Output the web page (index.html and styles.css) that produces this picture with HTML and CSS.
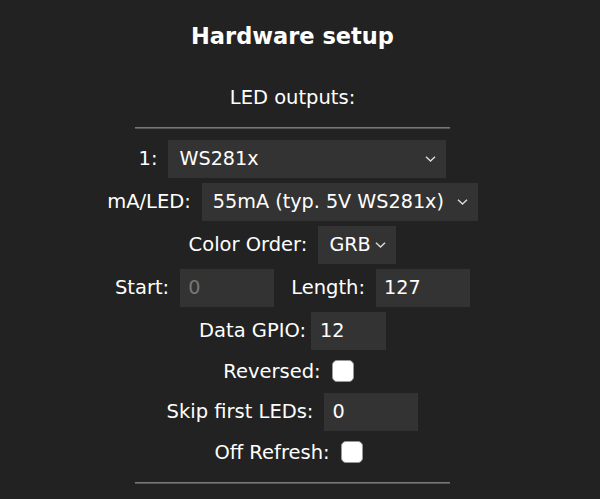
FILE: index.html
```html
<html>
<head>
    <title>Hardware setup</title>
    <link rel="stylesheet" href="styles.css">
</head>
<body>
    <div class="page">
        <h2 class="title">Hardware setup</h2>
        <div class="sect">LED outputs:</div>
        <hr>
        <div class="row">
            <span>1:</span>
            <select class="sel sel-type"><option>WS281x</option></select>
        </div>
        <div class="row">
            <span>mA/LED:</span>
            <select class="sel sel-ma"><option>55mA (typ. 5V WS281x)</option></select>
        </div>
        <div class="row">
            <span>Color Order:</span>
            <select class="sel sel-co"><option>GRB</option></select>
        </div>
        <div class="row">
            <span>Start:</span>
            <input class="num" type="number" placeholder="0" disabled>
            <span class="next">Length:</span>
            <input class="num" type="number" value="127">
        </div>
        <div class="row">
            <span>Data GPIO:</span>
            <input class="num gpio" type="number" value="12">
        </div>
        <div class="row short">
            <span>Reversed:</span>
            <input class="chk" type="checkbox">
        </div>
        <div class="row">
            <span>Skip first LEDs:</span>
            <input class="num" type="number" value="0">
        </div>
        <div class="row short">
            <span>Off Refresh:</span>
            <input class="chk" type="checkbox">
        </div>
        <hr class="end">
    </div>
</body>
</html>
```

FILE: styles.css
```css
body {
    margin: 0;
    background: #222;
    color: #fff;
    font-family: "DejaVu Sans", Verdana, sans-serif;
}
.page {
    width: 585px;
    text-align: center;
}
.title {
    margin: 23px 0 0;
    font-size: 22.5px;
    line-height: 26px;
}
.sect {
    margin-top: 37px;
    font-size: 19.5px;
    line-height: 23px;
}
hr {
    width: 315px;
    height: 0;
    margin: 18px auto 8px;
    border: 0;
    border-top: 1px solid #777;
    border-bottom: 1px solid #555;
}
hr.end {
    margin-top: 11px;
}
.row {
    display: flex;
    justify-content: center;
    align-items: center;
    height: 43px;
    font-size: 19.5px;
}
.row.short {
    height: 38px;
}
.sel, .num {
    box-sizing: border-box;
    height: 38px;
    margin: 0 0 0 11px;
    border: 0;
    border-radius: 0;
    outline: none;
    background-color: #333;
    color: #fff;
    font-family: "DejaVu Sans", Verdana, sans-serif;
    font-size: 19.2px;
}
.sel {
    appearance: none;
    -webkit-appearance: none;
    padding: 0 0 0 11px;
    text-align: left;
    background-image: url("data:image/svg+xml,%3Csvg xmlns='http://www.w3.org/2000/svg' width='11' height='6' viewBox='0 0 11 6'%3E%3Cpath d='M1 0.8 L5.5 5 L10 0.8' fill='none' stroke='%23ddd' stroke-width='1.4'/%3E%3C/svg%3E");
    background-repeat: no-repeat;
    background-position: right 10px center;
    background-size: 11px 6px;
}
.sel-type { width: 278px; }
.sel-ma { width: 276px; }
.sel-co { width: 78px; }
.num {
    width: 94px;
    padding: 0 8px;
    text-align: left;
    -moz-appearance: textfield;
}
.num::-webkit-inner-spin-button,
.num::-webkit-outer-spin-button {
    -webkit-appearance: none;
    margin: 0;
}
.num::placeholder {
    color: #777;
}
.num.gpio {
    width: 75px;
    margin-left: 5px;
    padding-left: 9px;
}
.next {
    margin-left: 17px;
}
.chk {
    appearance: none;
    -webkit-appearance: none;
    box-sizing: border-box;
    width: 22px;
    height: 22px;
    margin: 0 8px 0 11px;
    border: 1px solid #999;
    border-radius: 5px;
    background: #fff;
}
```
